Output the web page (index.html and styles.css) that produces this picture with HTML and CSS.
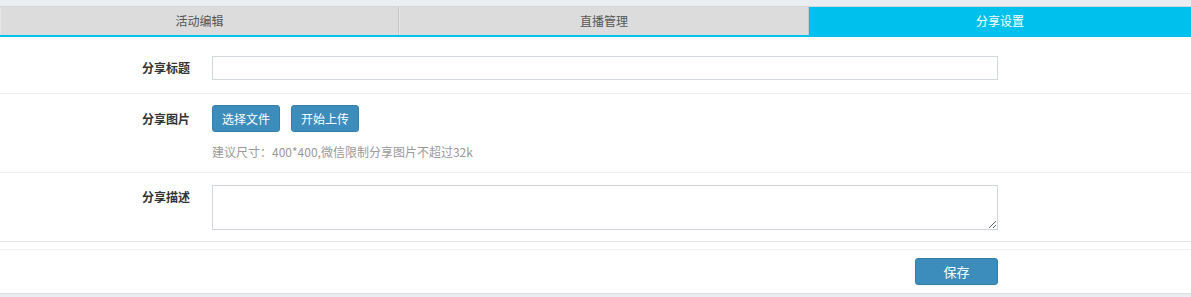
FILE: index.html
```html
<!DOCTYPE html>
<html lang="zh-CN">
<head>
    <meta charset="UTF-8">
    <meta name="viewport" content="width=device-width, initial-scale=1.0">
    <title>分享设置</title>
    <link rel="stylesheet" href="styles.css">
</head>
<body>
    <div class="page">
        <!-- 标签栏 -->
        <div class="tabs">
            <div class="tab">活动编辑</div>
            <div class="tab">直播管理</div>
            <div class="tab active">分享设置</div>
        </div>

        <div class="panel">
            <!-- 表单 -->
            <div class="form">
                <div class="row row-title">
                    <label class="label">分享标题</label>
                    <div class="field">
                        <input type="text" class="input">
                    </div>
                </div>
                <div class="row row-pic">
                    <label class="label">分享图片</label>
                    <div class="field">
                        <div class="btns">
                            <button class="btn">选择文件</button>
                            <button class="btn">开始上传</button>
                        </div>
                        <p class="help">建议尺寸：400*400,微信限制分享图片不超过32k</p>
                    </div>
                </div>
                <div class="row row-desc">
                    <label class="label">分享描述</label>
                    <div class="field">
                        <textarea class="textarea"></textarea>
                    </div>
                </div>
            </div>

            <div class="footer">
                <button class="btn btn-save">保存</button>
            </div>
        </div>
    </div>
</body>
</html>
```

FILE: styles.css
```css
body {
    margin: 0;
    padding: 0;
    background-color: #eaedf1;
    font-family: "Noto Sans CJK SC", "Liberation Sans", sans-serif;
    font-size: 12px;
    color: #333;
}

.page {
    padding-top: 6px;
}

.tabs {
    display: grid;
    grid-template-columns: 399px 410px 1fr;
    border-top: 1px solid #d4d6d9;
    border-bottom: 2px solid #00c1ee;
    background-color: #dcdcdc;
}

.tab {
    height: 28px;
    line-height: 28px;
    text-align: center;
    color: #555;
    border-right: 1px solid #c6c6c6;
    border-left: 1px solid #e6e6e6;
    box-sizing: border-box;
}

.tab.active {
    background-color: #00c1ee;
    color: white;
    border: none;
}

.panel {
    background-color: white;
    border-bottom: 1px solid #dcdfe3;
}

.row {
    display: grid;
    grid-template-columns: 190px 786px;
    column-gap: 22px;
    border-bottom: 1px solid #eeeeee;
}

.row-title {
    padding: 19px 0 13px;
}

.row-pic {
    padding: 11px 0 10px;
}

.row-desc {
    padding: 12px 0 11px;
    border-bottom: 1px solid #e4e4e4;
}

.label {
    text-align: right;
    font-weight: bold;
    line-height: 24px;
    color: #333;
}

.row-pic .label {
    line-height: 27px;
}

.input {
    display: block;
    width: 100%;
    height: 24px;
    box-sizing: border-box;
    border: 1px solid #d2d6de;
    padding: 2px 6px;
    margin: 0;
}

.textarea {
    display: block;
    width: 100%;
    height: 45px;
    box-sizing: border-box;
    border: 1px solid #d2d6de;
    padding: 4px 6px;
    margin: 0;
    resize: vertical;
    font-family: inherit;
}

.btns {
    display: flex;
    gap: 11px;
}

.btn {
    background-color: #3c8dbc;
    border: 1px solid #367fa9;
    border-radius: 3px;
    color: white;
    font-family: inherit;
    font-size: 12px;
    height: 27px;
    padding: 0 9px;
    cursor: pointer;
}

.help {
    margin: 10px 0 0;
    line-height: 20px;
    color: #999;
}

.footer {
    margin-top: 7px;
    border-top: 1px solid #efefef;
    padding: 8px 0 8px;
    display: flex;
}

.btn-save {
    margin-left: 915px;
    width: 83px;
    font-size: 13px;
}
```
